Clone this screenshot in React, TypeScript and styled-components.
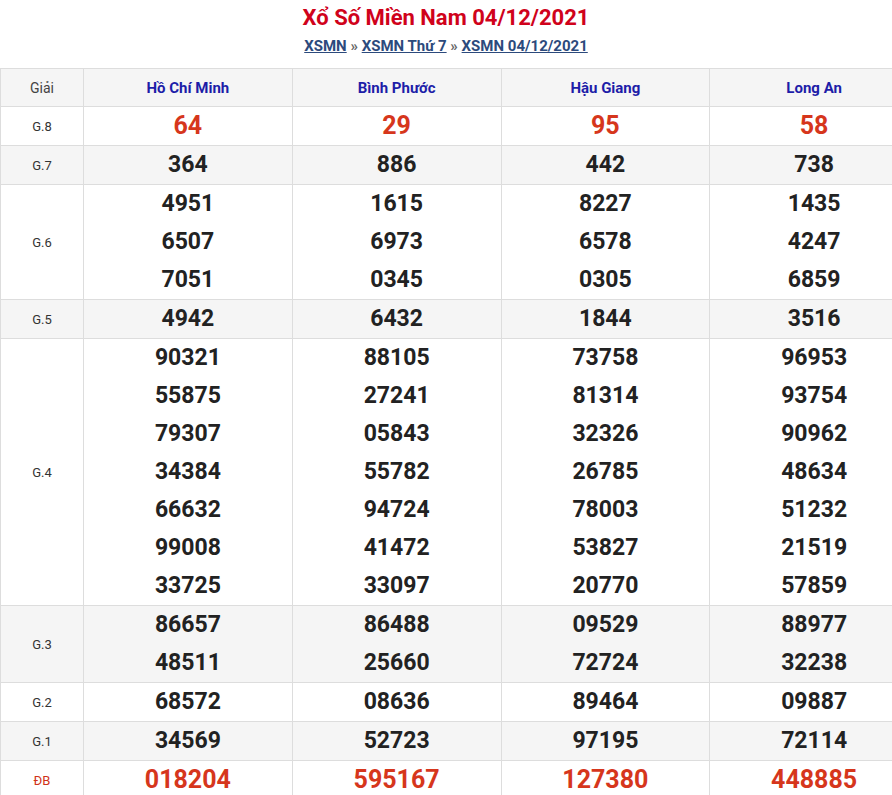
import React from "react";
import styled, { createGlobalStyle } from "styled-components";

const Global = createGlobalStyle`
  body { margin: 0; background: #fff; font-family: Roboto, "Liberation Sans", sans-serif; overflow: hidden; }
`;

const Page = styled.div`
  width: 892px; overflow: hidden;
`;
const Header = styled.div`
  height: 68px; display: flex; flex-direction: column; align-items: center;
`;
const Title = styled.h1`
  margin: 3px 0 0; font-size: 22px; line-height: 30px; font-weight: 700; color: #d0021b;
`;
const Crumbs = styled.div`
  margin-top: 4px; font-size: 15px; font-weight: 700; color: #666;
  a { color: #2c4a7c; text-decoration: underline; }
`;
const Table = styled.table`
  width: 919px; border-collapse: collapse; table-layout: fixed;
  td, th { border: 1px solid #ddd; text-align: center; padding: 0; }
`;
const Row = styled.tr<{ $grey?: boolean }>`
  background: ${p => (p.$grey ? "#f5f5f5" : "#fff")};
`;
const HeadCell = styled.th`
  height: 37px; font-size: 15px; font-weight: 700; color: #1d1da8;
`;
const LabelCell = styled.td<{ $red?: boolean }>`
  font-size: 13px; color: ${p => (p.$red ? "#d0331a" : "#333")}; font-weight: 400;
`;
const GiaiCell = styled.th`
  font-size: 14px; font-weight: 400; color: #444;
`;
const NumCell = styled.td``;
const Num = styled.div<{ $red?: boolean }>`
  height: 38px; line-height: 38px; font-size: ${p => (p.$red ? "25px" : "23px")};
  font-weight: 700; color: ${p => (p.$red ? "#d6361c" : "#222")};
`;

const provinces = ["Hồ Chí Minh", "Bình Phước", "Hậu Giang", "Long An"];
const rows: { label: string; red?: boolean; data: string[][] }[] = [
  { label: "G.8", red: true, data: [["64"], ["29"], ["95"], ["58"]] },
  { label: "G.7", data: [["364"], ["886"], ["442"], ["738"]] },
  { label: "G.6", data: [["4951", "6507", "7051"], ["1615", "6973", "0345"], ["8227", "6578", "0305"], ["1435", "4247", "6859"]] },
  { label: "G.5", data: [["4942"], ["6432"], ["1844"], ["3516"]] },
  { label: "G.4", data: [
    ["90321", "55875", "79307", "34384", "66632", "99008", "33725"],
    ["88105", "27241", "05843", "55782", "94724", "41472", "33097"],
    ["73758", "81314", "32326", "26785", "78003", "53827", "20770"],
    ["96953", "93754", "90962", "48634", "51232", "21519", "57859"],
  ] },
  { label: "G.3", data: [["86657", "48511"], ["86488", "25660"], ["09529", "72724"], ["88977", "32238"]] },
  { label: "G.2", data: [["68572"], ["08636"], ["89464"], ["09887"]] },
  { label: "G.1", data: [["34569"], ["52723"], ["97195"], ["72114"]] },
  { label: "ĐB", red: true, data: [["018204"], ["595167"], ["127380"], ["448885"]] },
];

export default function App() {
  return (
    <Page>
      <Global />
      <Header>
        <Title>Xổ Số Miền Nam 04/12/2021</Title>
        <Crumbs>
          <a>XSMN</a> » <a>XSMN Thứ 7</a> » <a>XSMN 04/12/2021</a>
        </Crumbs>
      </Header>
      <Table>
        <colgroup>
          <col style={{ width: 83 }} />
          <col /><col /><col /><col />
        </colgroup>
        <tbody>
          <Row $grey>
            <GiaiCell>Giải</GiaiCell>
            {provinces.map(p => <HeadCell key={p}>{p}</HeadCell>)}
          </Row>
          {rows.map((r, i) => (
            <Row key={r.label} $grey={i % 2 === 1}>
              <LabelCell $red={r.label === "ĐB"}>{r.label}</LabelCell>
              {r.data.map((c, j) => (
                <NumCell key={j}>
                  {c.map((n, k) => <Num key={k} $red={r.red}>{n}</Num>)}
                </NumCell>
              ))}
            </Row>
          ))}
        </tbody>
      </Table>
    </Page>
  );
}
